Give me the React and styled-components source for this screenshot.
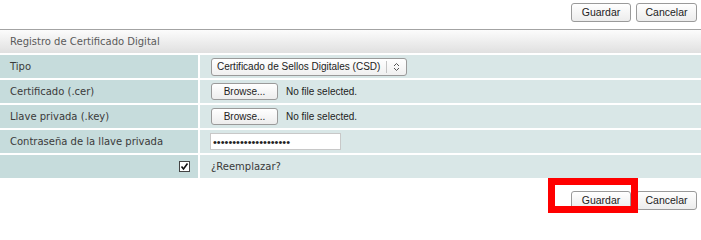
import { Fragment } from 'react';
import styled, { createGlobalStyle } from 'styled-components';

const GlobalStyle = createGlobalStyle`
  body {
    margin: 0;
    background: #fff;
    font-family: "DejaVu Sans", Verdana, sans-serif;
  }
`;

const Page = styled.div`
  position: relative;
  width: 701px;
  height: 213px;
  overflow: hidden;
`;

const Toolbar = styled.div`
  display: flex;
  justify-content: flex-end;
  gap: 5px;
  padding: 3px 4px 0 0;
  height: 29px;
  box-sizing: border-box;
  margin-top: ${p => p.$top || 0}px;
`;

const Button = styled.button`
  height: 19px;
  width: ${p => p.$w}px;
  padding: 0;
  font-family: "Liberation Sans", Arial, sans-serif;
  font-size: 10.5px;
  color: #222;
  background: linear-gradient(#ffffff, #ececec);
  border: 1px solid #9a9a9a;
  border-radius: 3px;
  line-height: 17px;
`;

const Panel = styled.section`
  display: flex;
  flex-direction: column;
`;

const Header = styled.div`
  height: 23px;
  border-top: 1px solid #a3a3a3;
  background: linear-gradient(#fcfcfc, #e0e0e0);
  color: #5a5a5a;
  font-size: 10px;
  padding-left: 10px;
  display: flex;
  align-items: center;
  margin-bottom: 2px;
`;

const Form = styled.div`
  display: grid;
  grid-template-columns: 198px 1fr;
  grid-auto-rows: 23px;
  column-gap: 2px;
  row-gap: 2px;
`;

const Label = styled.div`
  background: #c6dcdc;
  color: #3a3a3a;
  font-size: 10px;
  display: flex;
  align-items: center;
  justify-content: ${p => (p.$right ? 'flex-end' : 'flex-start')};
  padding: 0 8px 0 10px;
`;

const Value = styled.div`
  background: #d9e7e7;
  color: #3a3a3a;
  font-size: 10px;
  display: flex;
  align-items: center;
  gap: 8px;
  padding-left: 11px;
`;

const Select = styled.div`
  display: flex;
  align-items: center;
  width: 196px;
  height: 18px;
  box-sizing: border-box;
  border: 1px solid #9a9a9a;
  border-radius: 3px;
  background: linear-gradient(#ffffff, #f0f0f0);
  font-family: "Liberation Sans", Arial, sans-serif;
  font-size: 10px;
  color: #222;
`;

const SelectText = styled.span`
  flex: 1;
  padding-left: 5px;
  white-space: nowrap;
`;

const SelectArrow = styled.span`
  width: 19px;
  height: 12px;
  border-left: 1px solid #c4c4c4;
  display: flex;
  align-items: center;
  justify-content: center;
`;

const FileButton = styled.span`
  width: 67px;
  height: 17px;
  box-sizing: border-box;
  border: 1px solid #9a9a9a;
  border-radius: 3px;
  background: linear-gradient(#ffffff, #ededed);
  font-family: "Liberation Sans", Arial, sans-serif;
  font-size: 10px;
  color: #222;
  display: flex;
  align-items: center;
  justify-content: center;
`;

const FileText = styled.span`
  font-family: "Liberation Sans", Arial, sans-serif;
  font-size: 10px;
  color: #222;
`;

const Password = styled.input`
  width: 131px;
  height: 17px;
  box-sizing: border-box;
  border: 1px solid #c8c8c8;
  background: #fff;
  padding: 0 2px;
  font-family: "Liberation Sans", Arial, sans-serif;
  font-size: 11px;
  line-height: 15px;
  color: #222;
  margin-left: -1px;
`;

const Check = styled.span`
  width: 11px;
  height: 11px;
  box-sizing: border-box;
  border: 1px solid #444;
  background: #fff;
  display: flex;
  align-items: center;
  justify-content: center;
`;

const Highlight = styled.div`
  position: absolute;
  left: 548px;
  top: 178px;
  width: 90px;
  height: 35px;
  box-sizing: border-box;
  border: 7px solid #ff0000;
  pointer-events: none;
`;

const rows = [
  { label: 'Tipo', kind: 'select' },
  { label: 'Certificado (.cer)', kind: 'file' },
  { label: 'Llave privada (.key)', kind: 'file' },
  { label: 'Contraseña de la llave privada', kind: 'password' },
];

const Buttons = ({ top }) => (
  <Toolbar $top={top}>
    <Button $w={60}>Guardar</Button>
    <Button $w={61}>Cancelar</Button>
  </Toolbar>
);

const App = () => {
  return (
    <Page>
      <GlobalStyle />
      <Buttons />
      <Panel>
        <Header>Registro de Certificado Digital</Header>
        <Form>
          {rows.map(row => (
            <Fragment key={row.label}>
              <Label>{row.label}</Label>
              <Value>
                {row.kind === 'select' && (
                  <Select>
                    <SelectText>Certificado de Sellos Digitales (CSD)</SelectText>
                    <SelectArrow>
                      <svg width="7" height="10" viewBox="0 0 7 10">
                        <path d="M1 4 L3.5 1.5 L6 4 M1 6 L3.5 8.5 L6 6" fill="none" stroke="#555" strokeWidth="1" />
                      </svg>
                    </SelectArrow>
                  </Select>
                )}
                {row.kind === 'file' && (
                  <>
                    <FileButton>Browse...</FileButton>
                    <FileText>No file selected.</FileText>
                  </>
                )}
                {row.kind === 'password' && (
                  <Password type="password" defaultValue="12345678901234567890" readOnly />
                )}
              </Value>
            </Fragment>
          ))}
          <Label $right>
            <Check>
              <svg width="9" height="9" viewBox="0 0 9 9">
                <path d="M1.5 4.5 L3.5 7 L7.5 1.5" fill="none" stroke="#111" strokeWidth="1.6" />
              </svg>
            </Check>
          </Label>
          <Value>¿Reemplazar?</Value>
        </Form>
      </Panel>
      <Buttons top={10} />
      <Highlight />
    </Page>
  );
};

export default App;
